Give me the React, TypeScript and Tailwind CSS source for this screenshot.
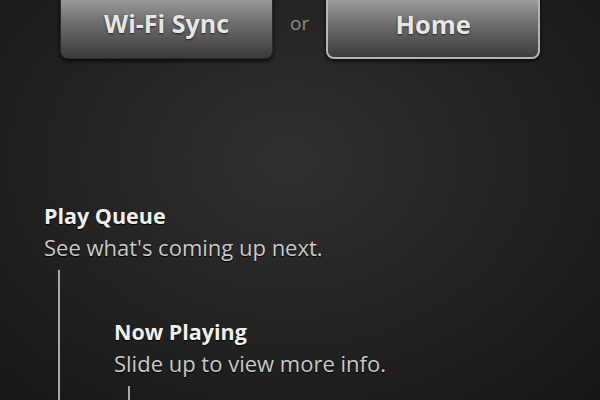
const font = { fontFamily: '"Open Sans", "DejaVu Sans", sans-serif' }

interface Step {
  title: string
  hint: string
  next?: Step
}

const tour: Step = {
  title: 'Play Queue',
  hint: "See what's coming up next.",
  next: {
    title: 'Now Playing',
    hint: 'Slide up to view more info.',
    next: { title: '', hint: '' },
  },
}

function TourStep({ step }: { step: Step }) {
  if (!step.title) return <div className="h-[120px]" />
  return (
    <div>
      <p className="text-[21.5px] leading-[28px] font-bold text-[#f0f0f0] [text-shadow:0_1px_1px_#000]">{step.title}</p>
      <p className="mt-[3px] text-[22px] leading-[28px] text-[#cacaca] [text-shadow:0_1px_1px_#000]">{step.hint}</p>
      {step.next && (
        <div className="ml-[14px] mt-[9px] border-l-2 border-[#a8a8a8] pl-[54px] pt-[48px]">
          <TourStep step={step.next} />
        </div>
      )}
    </div>
  )
}

export default function App() {
  return (
    <div
      style={font}
      className="relative h-[400px] w-[600px] overflow-hidden bg-[radial-gradient(ellipse_at_48%_40%,#303030_0%,#242424_45%,#161616_100%)]"
    >
      <div className="mt-[-13px] flex items-center gap-[17px] pl-[60px]">
        <button className="h-[72px] w-[213px] rounded-[8px] border border-[#2a2a2a] bg-gradient-to-b from-[#b0b0b0] via-[#6e6e6e] to-[#3a3a3a] text-[25px] font-bold text-[#e6e6e6] shadow-[0_2px_4px_rgba(0,0,0,0.8)] [text-shadow:0_1px_2px_#222]">
          <span className="relative top-[1px]">Wi-Fi Sync</span>
        </button>
        <span className="text-[19px] text-[#8a8a8a]">or</span>
        <button className="h-[72px] w-[214px] rounded-[8px] border-2 border-[#b4b4b4] bg-gradient-to-b from-[#b0b0b0] via-[#707070] to-[#3c3c3c] text-[25.5px] font-bold text-[#e6e6e6] shadow-[0_2px_4px_rgba(0,0,0,0.8)] [text-shadow:0_1px_2px_#222]">
          <span className="relative top-[1px]">Home</span>
        </button>
      </div>
      <div className="mt-[143px] pl-[44px]">
        <TourStep step={tour} />
      </div>
    </div>
  )
}
